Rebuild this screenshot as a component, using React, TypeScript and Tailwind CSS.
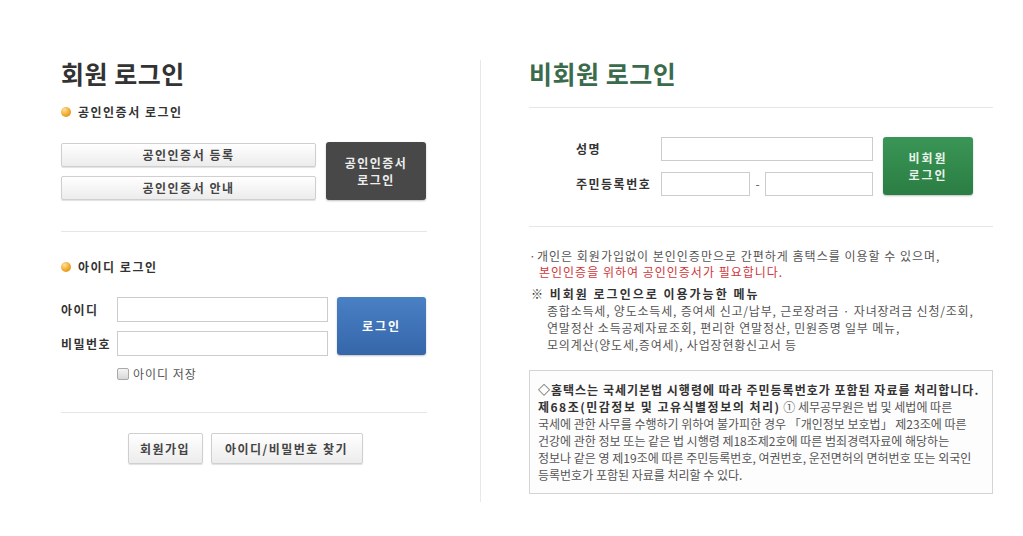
import React from "react";

const font = { fontFamily: '"Noto Sans CJK KR", "Noto Sans", sans-serif' };

function Bullet() {
  return (
    <span className="inline-block w-[10px] h-[10px] rounded-full bg-[radial-gradient(circle_at_35%_30%,#ffe09a,#f0a72a_55%,#d98410)] mr-[7px] shrink-0" />
  );
}

function GrayBtn({ children, className = "" }: { children: React.ReactNode; className?: string }) {
  return (
    <button
      className={
        "flex items-center justify-center border border-[#cfcfcf] rounded-[2px] bg-gradient-to-b from-white to-[#ececec] shadow-[0_1px_1px_rgba(0,0,0,0.12)] text-[12px] font-bold text-[#444] tracking-[1.5px] " +
        className
      }
    >
      {children}
    </button>
  );
}

function Input({ className = "" }: { className?: string }) {
  return <div className={"border border-[#cccccc] bg-white " + className} />;
}

export default function App() {
  return (
    <div className="w-[1023px] h-[536px] bg-white overflow-hidden" style={font}>
      <div className="flex pt-[57px] pl-[61px]">
        {/* Left column */}
        <div className="w-[366px] flex flex-col">
          <h1 className="text-[25px] leading-[32px] font-bold text-[#333] tracking-[0.5px] whitespace-nowrap">회원 로그인</h1>

          <div className="flex items-center mt-[15px] h-[16px]">
            <Bullet />
            <span className="text-[12px] font-bold text-[#333] leading-[16px] tracking-[1.5px]">공인인증서 로그인</span>
          </div>

          <div className="flex mt-[22px] gap-[10px]">
            <div className="flex flex-col gap-[9px] w-[255px] pt-[1px]">
              <GrayBtn className="h-[24px] w-full">공인인증서 등록</GrayBtn>
              <GrayBtn className="h-[24px] w-full">공인인증서 안내</GrayBtn>
            </div>
            <button className="w-[100px] h-[58px] rounded-[3px] bg-[#484848] shadow-[0_1px_2px_rgba(0,0,0,0.25)] text-[12px] leading-[17px] font-bold text-[#eeeeee] tracking-[1.5px] flex flex-col items-center justify-center">
              <span>공인인증서</span>
              <span>로그인</span>
            </button>
          </div>

          <div className="h-px bg-[#e6e6e6] mt-[31px]" />

          <div className="flex items-center mt-[27px] h-[16px]">
            <Bullet />
            <span className="text-[12px] font-bold text-[#333] leading-[16px] tracking-[1.5px]">아이디 로그인</span>
          </div>

          <div className="flex mt-[22px]">
            <div className="flex flex-col gap-[9px]">
              <div className="flex items-center h-[25px]">
                <span className="w-[56px] text-[12px] font-bold text-[#333] tracking-[1.5px]">아이디</span>
                <Input className="w-[211px] h-[25px]" />
              </div>
              <div className="flex items-center h-[25px]">
                <span className="w-[56px] text-[12px] font-bold text-[#333] tracking-[1.5px]">비밀번호</span>
                <Input className="w-[211px] h-[25px]" />
              </div>
            </div>
            <button className="ml-[9px] w-[89px] h-[58px] rounded-[3px] bg-gradient-to-b from-[#4a80c4] to-[#3566aa] shadow-[0_1px_2px_rgba(0,0,0,0.25)] text-[12px] font-bold text-white tracking-[2px]">
              로그인
            </button>
          </div>

          <div className="flex items-center mt-[10px] ml-[56px] h-[16px]">
            <span className="w-[12px] h-[12px] border border-[#a9a9a9] rounded-[2px] bg-gradient-to-b from-[#f4f4f4] to-[#d8d8d8] mr-[4px]" />
            <span className="text-[12px] text-[#555] tracking-[1px]">아이디 저장</span>
          </div>

          <div className="h-px bg-[#e6e6e6] mt-[30px]" />

          <div className="flex justify-center gap-[8px] mt-[20px] pl-[2px]">
            <GrayBtn className="w-[75px] h-[31px]">회원가입</GrayBtn>
            <GrayBtn className="w-[152px] h-[31px]">아이디/비밀번호 찾기</GrayBtn>
          </div>
        </div>

        {/* Vertical divider */}
        <div className="ml-[53px] mt-[3px] w-px h-[442px] bg-[#e8e8e8] self-start" />

        {/* Right column */}
        <div className="ml-[48px] w-[464px] flex flex-col">
          <h1 className="text-[25px] leading-[32px] font-bold text-[#3b6b4d] tracking-[0.5px] whitespace-nowrap">비회원 로그인</h1>

          <div className="h-px bg-[#e6e6e6] mt-[18px]" />

          <div className="flex mt-[29px] pl-[47px]">
            <div className="flex flex-col gap-[11px]">
              <div className="flex items-center h-[24px]">
                <span className="w-[85px] text-[12px] font-bold text-[#333] tracking-[1.5px]">성명</span>
                <Input className="w-[212px] h-[24px]" />
              </div>
              <div className="flex items-center h-[24px]">
                <span className="w-[85px] text-[12px] font-bold text-[#333] tracking-[1.5px] whitespace-nowrap">주민등록번호</span>
                <Input className="w-[89px] h-[24px]" />
                <span className="w-[15px] text-center text-[12px] text-[#555]">-</span>
                <Input className="w-[108px] h-[24px]" />
              </div>
            </div>
            <button className="ml-[10px] w-[90px] h-[58px] rounded-[3px] bg-gradient-to-b from-[#3a9656] to-[#2b7d43] shadow-[0_1px_2px_rgba(0,0,0,0.25)] text-[12px] leading-[17px] font-bold text-[#e8f3ea] tracking-[2px] flex flex-col items-center justify-center">
              <span>비회원</span>
              <span>로그인</span>
            </button>
          </div>

          <div className="h-px bg-[#e6e6e6] mt-[30px]" />

          <div className="mt-[21px] text-[12px] leading-[16px] text-[#555] whitespace-nowrap tracking-[1px]">
            <div className="flex">
              <span className="w-[8px]">·</span>
              <span>개인은 회원가입없이 본인인증만으로 간편하게 홈택스를 이용할 수 있으며,</span>
            </div>
            <div className="pl-[10px] text-[#d0373c]">본인인증을 위하여 공인인증서가 필요합니다.</div>
          </div>

          <div className="mt-[5px] text-[12px] leading-[17px] whitespace-nowrap">
            <div className="font-bold text-[#333] pl-[2px] tracking-[2px]">※ 비회원 로그인으로 이용가능한 메뉴</div>
            <div className="pl-[18px] text-[#555] tracking-[0.8px]">
              <div>종합소득세, 양도소득세, 증여세 신고/납부, 근로장려금 · 자녀장려금 신청/조회,</div>
              <div>연말정산 소득공제자료조회, 편리한 연말정산, 민원증명 일부 메뉴,</div>
              <div>모의계산(양도세,증여세), 사업장현황신고서 등</div>
            </div>
          </div>

          <div className="mt-[17px] h-[124px] border border-[#d4d4d4] bg-[#fdfdfd] px-[8px] py-[10px] text-[12px] leading-[17px] text-[#555] whitespace-nowrap">
            <div className="font-bold text-[#333] tracking-[1px]">◇홈택스는 국세기본법 시행령에 따라 주민등록번호가 포함된 자료를 처리합니다.</div>
            <div>
              <span className="font-bold text-[#333] tracking-[1.5px]">제68조(민감정보 및 고유식별정보의 처리)</span> ① 세무공무원은 법 및 세법에 따른
            </div>
            <div>국세에 관한 사무를 수행하기 위하여 불가피한 경우 「개인정보 보호법」 제23조에 따른</div>
            <div>건강에 관한 정보 또는 같은 법 시행령 제18조제2호에 따른 범죄경력자료에 해당하는</div>
            <div>정보나 같은 영 제19조에 따른 주민등록번호, 여권번호, 운전면허의 면허번호 또는 외국인</div>
            <div>등록번호가 포함된 자료를 처리할 수 있다.</div>
          </div>
        </div>
      </div>
    </div>
  );
}
